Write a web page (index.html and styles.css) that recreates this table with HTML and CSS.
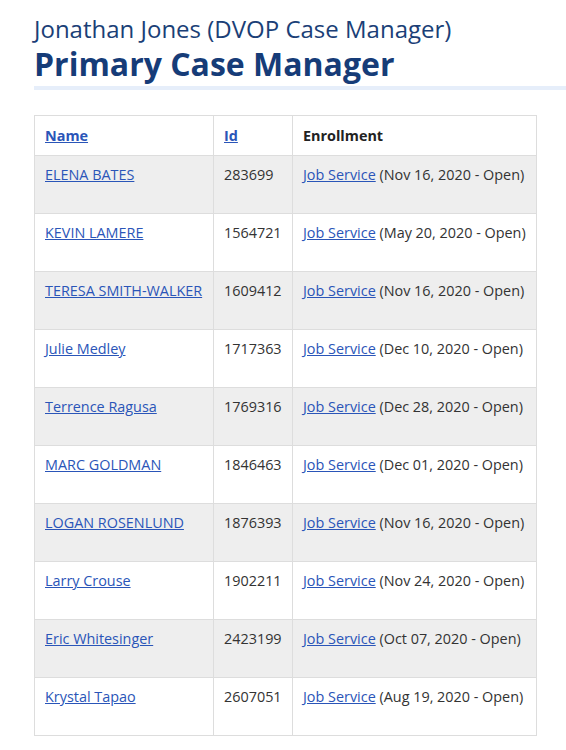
FILE: index.html
```html
<!DOCTYPE html>
<html>
<head>
<meta charset="utf-8">
<link rel="stylesheet" href="styles.css">
</head>
<body>
<div class="page">
  <header class="title">
    <div class="subtitle">Jonathan Jones (DVOP Case Manager)</div>
    <h1 class="heading">Primary Case Manager</h1>
  </header>
  <table class="cases">
    <thead>
      <tr>
        <th class="c-name"><a href="#">Name</a></th>
        <th class="c-id"><a href="#">Id</a></th>
        <th class="c-enr">Enrollment</th>
      </tr>
    </thead>
    <tbody>
      <tr><td><a href="#">ELENA BATES</a></td><td>283699</td><td><a href="#">Job Service</a> (Nov 16, 2020 - Open)</td></tr>
      <tr><td><a href="#">KEVIN LAMERE</a></td><td>1564721</td><td><a href="#">Job Service</a> (May 20, 2020 - Open)</td></tr>
      <tr><td><a href="#">TERESA SMITH-WALKER</a></td><td>1609412</td><td><a href="#">Job Service</a> (Nov 16, 2020 - Open)</td></tr>
      <tr><td><a href="#">Julie Medley</a></td><td>1717363</td><td><a href="#">Job Service</a> (Dec 10, 2020 - Open)</td></tr>
      <tr><td><a href="#">Terrence Ragusa</a></td><td>1769316</td><td><a href="#">Job Service</a> (Dec 28, 2020 - Open)</td></tr>
      <tr><td><a href="#">MARC GOLDMAN</a></td><td>1846463</td><td><a href="#">Job Service</a> (Dec 01, 2020 - Open)</td></tr>
      <tr><td><a href="#">LOGAN ROSENLUND</a></td><td>1876393</td><td><a href="#">Job Service</a> (Nov 16, 2020 - Open)</td></tr>
      <tr><td><a href="#">Larry Crouse</a></td><td>1902211</td><td><a href="#">Job Service</a> (Nov 24, 2020 - Open)</td></tr>
      <tr><td><a href="#">Eric Whitesinger</a></td><td>2423199</td><td><a href="#">Job Service</a> (Oct 07, 2020 - Open)</td></tr>
      <tr><td><a href="#">Krystal Tapao</a></td><td>2607051</td><td><a href="#">Job Service</a> (Aug 19, 2020 - Open)</td></tr>
    </tbody>
  </table>
</div>
</body>
</html>
```

FILE: styles.css
```css
html, body {
  margin: 0;
  padding: 0;
  background: #ffffff;
}
body {
  font-family: "Open Sans", "Liberation Sans", sans-serif;
  color: #333333;
  font-size: 14.4px;
}
.page {
  padding: 14px 0 0 34px;
}
.title {
  border-bottom: 4px solid #e6eefa;
  padding-bottom: 3px;
  margin-bottom: 25px;
}
.subtitle {
  font-size: 24px;
  line-height: 30px;
  color: #1b3f77;
}
.heading {
  margin: 0;
  font-size: 32px;
  line-height: 39px;
  font-weight: 700;
  color: #163c78;
}
.cases {
  border-collapse: collapse;
  width: 503px;
}
.cases th, .cases td {
  border: 1px solid #dddddd;
  text-align: left;
  vertical-align: top;
  padding: 0 10px;
  line-height: 20px;
  white-space: nowrap;
}
.cases th {
  height: 40px;
  padding-top: 10px;
  box-sizing: border-box;
  font-weight: 700;
  color: #222222;
}
.cases td {
  height: 58px;
  padding-top: 9px;
  box-sizing: border-box;
}
.cases tbody tr:nth-child(odd) td {
  background: #eeeeee;
}
.cases a {
  color: #2a55b8;
  text-decoration: underline;
}
.c-name { width: 179px; }
.c-id { width: 79px; }
```
